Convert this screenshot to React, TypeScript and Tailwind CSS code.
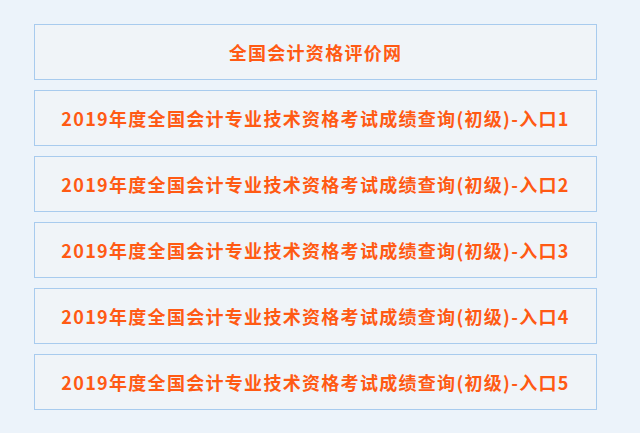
const entries = [1, 2, 3, 4, 5].map(
  (n) => `2019年度全国会计专业技术资格考试成绩查询(初级)-入口${n}`
);

function LinkBox({ label }: { label: string }) {
  return (
    <a
      href="#"
      className="flex h-[56px] items-center justify-center border border-[#a8cbee] bg-[#f0f4f8] text-[18px] font-bold tracking-[1.3px] text-[#ff5a14]"
    >
      {label}
    </a>
  );
}

export default function App() {
  return (
    <div
      className="min-h-[433px] bg-[#ecf3fa] px-[34px] pt-[24px]"
      style={{ fontFamily: '"Microsoft YaHei", "Noto Sans CJK SC", "Noto Sans", sans-serif' }}
    >
      <div className="flex w-[563px] flex-col gap-[10px]">
        <LinkBox label="全国会计资格评价网" />
        {entries.map((label) => (
          <LinkBox key={label} label={label} />
        ))}
      </div>
    </div>
  );
}
